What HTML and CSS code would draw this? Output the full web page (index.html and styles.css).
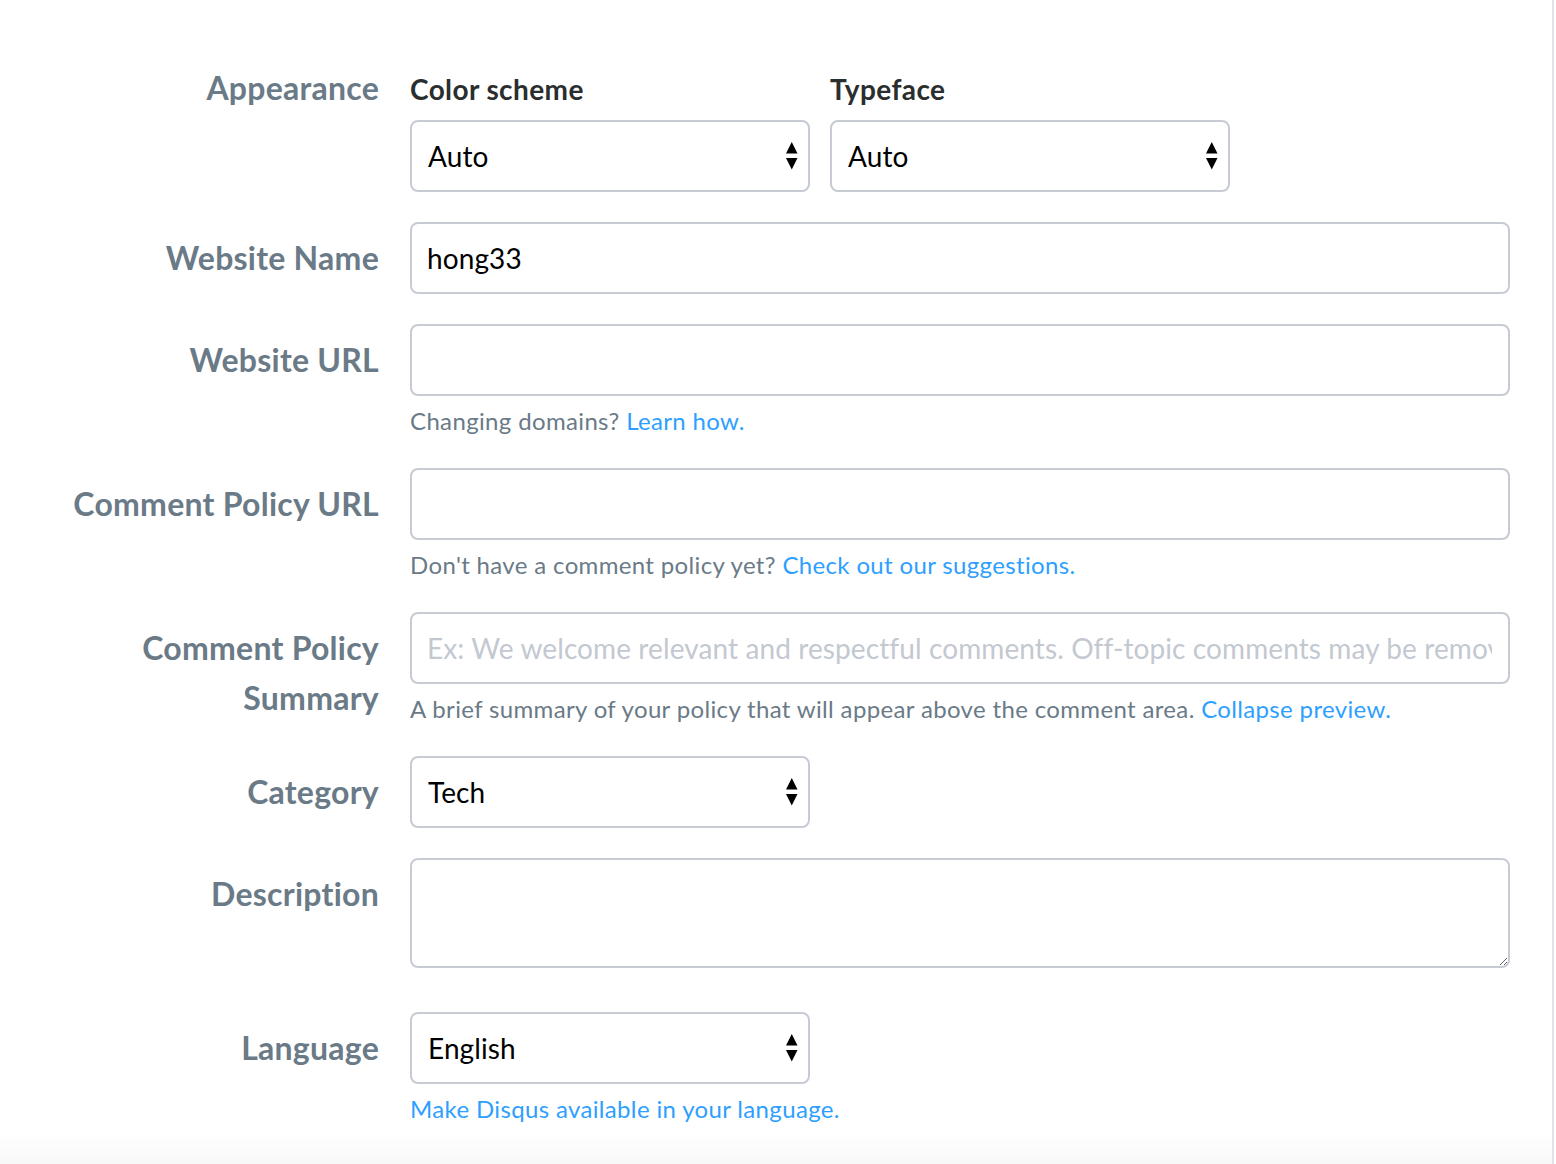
FILE: index.html
```html
<!DOCTYPE html>
<html lang="en">
<head>
<meta charset="utf-8">
<title>General settings</title>
<link rel="stylesheet" href="styles.css">
</head>
<body>
<div class="page">
  <form class="settings">
    <div class="row">
      <div class="label label-top">Appearance</div>
      <div class="field">
        <div class="pair">
          <div class="sub">
            <div class="sublabel">Color scheme</div>
            <div class="select-wrap">
              <select class="select"><option>Auto</option><option>Light</option><option>Dark</option></select>
              <svg class="arrows" viewBox="0 0 12 28" width="12" height="28"><polygon points="0,11.5 5.75,0 11.5,11.5"/><polygon points="0,16 11.5,16 5.75,27.5"/></svg>
            </div>
          </div>
          <div class="sub">
            <div class="sublabel">Typeface</div>
            <div class="select-wrap">
              <select class="select"><option>Auto</option><option>Serif</option><option>Sans-serif</option></select>
              <svg class="arrows" viewBox="0 0 12 28" width="12" height="28"><polygon points="0,11.5 5.75,0 11.5,11.5"/><polygon points="0,16 11.5,16 5.75,27.5"/></svg>
            </div>
          </div>
        </div>
      </div>
    </div>

    <div class="row">
      <div class="label">Website Name</div>
      <div class="field"><input class="input" type="text" value="hong33"></div>
    </div>

    <div class="row">
      <div class="label">Website URL</div>
      <div class="field">
        <input class="input" type="text" value="">
        <p class="help">Changing domains? <a href="#" class="link">Learn how.</a></p>
      </div>
    </div>

    <div class="row">
      <div class="label">Comment Policy URL</div>
      <div class="field">
        <input class="input" type="text" value="">
        <p class="help">Don't have a comment policy yet? <a href="#" class="link">Check out our suggestions.</a></p>
      </div>
    </div>

    <div class="row">
      <div class="label">Comment Policy<br>Summary</div>
      <div class="field">
        <input class="input" type="text" placeholder="Ex: We welcome relevant and respectful comments. Off-topic comments may be removed.">
        <p class="help">A brief summary of your policy that will appear above the comment area. <a href="#" class="link">Collapse preview.</a></p>
      </div>
    </div>

    <div class="row">
      <div class="label">Category</div>
      <div class="field">
        <div class="select-wrap">
          <select class="select"><option>Tech</option><option>News</option><option>Culture</option></select>
          <svg class="arrows" viewBox="0 0 12 28" width="12" height="28"><polygon points="0,11.5 5.75,0 11.5,11.5"/><polygon points="0,16 11.5,16 5.75,27.5"/></svg>
        </div>
      </div>
    </div>

    <div class="row row-wide">
      <div class="label">Description</div>
      <div class="field"><textarea class="textarea"></textarea></div>
    </div>

    <div class="row">
      <div class="label">Language</div>
      <div class="field">
        <div class="select-wrap">
          <select class="select"><option>English</option><option>Español</option></select>
          <svg class="arrows" viewBox="0 0 12 28" width="12" height="28"><polygon points="0,11.5 5.75,0 11.5,11.5"/><polygon points="0,16 11.5,16 5.75,27.5"/></svg>
        </div>
        <p class="help"><a href="#" class="link">Make Disqus available in your language.</a></p>
      </div>
    </div>
  </form>
</div>
</body>
</html>
```

FILE: styles.css
```css
html, body {
  margin: 0;
  padding: 0;
}

body {
  font-family: Lato, "Liberation Sans", sans-serif;
  background: #fff;
}

.page {
  width: 1554px;
  height: 1164px;
  box-sizing: border-box;
  border-right: 2px solid #dfe2e9;
  background: linear-gradient(to bottom, #ffffff 0px, #ffffff 1132px, #f8f8f8 1164px);
  overflow: hidden;
}

.settings {
  padding-top: 69px;
}

.row {
  display: grid;
  grid-template-columns: 379px 1100px;
  column-gap: 31px;
  margin-bottom: 30px;
}

.row-wide {
  margin-bottom: 44px;
}

.label {
  text-align: right;
  font-size: 32px;
  line-height: 50px;
  padding-top: 11px;
  font-weight: 700;
  color: #6a7a87;
  letter-spacing: 0.25px;
}

.label-top {
  padding-top: 0;
  line-height: 38px;
}

.field {
  min-width: 0;
}

.pair {
  display: flex;
  gap: 20px;
}

.sub {
  width: 400px;
}

.sublabel {
  font-size: 28px;
  line-height: 40px;
  font-weight: 700;
  color: #2a2e2e;
  margin-bottom: 11px;
  letter-spacing: 0.4px;
}

.select-wrap {
  position: relative;
  width: 400px;
}

.select,
.input,
.textarea {
  display: block;
  box-sizing: border-box;
  border: 2px solid #c6cbd4;
  border-radius: 8px;
  background: #fff;
  font-family: Lato, "Liberation Sans", sans-serif;
  font-size: 28px;
  letter-spacing: 0.1px;
  color: #000;
  outline: none;
  margin: 0;
}

.select {
  -webkit-appearance: none;
  appearance: none;
  width: 400px;
  height: 72px;
  padding: 0 40px 0 16px;
}

.arrows {
  position: absolute;
  right: 12px;
  top: 22px;
  fill: #000;
  pointer-events: none;
}

.input {
  width: 1100px;
  height: 72px;
  padding: 0 16px 0 15px;
}

.input::placeholder {
  color: #c3c8d1;
  opacity: 1;
}

.textarea {
  width: 1100px;
  height: 110px;
  padding: 12px 15px;
  resize: vertical;
}

.help {
  margin: 7px 0 0;
  font-size: 24px;
  line-height: 35px;
  color: #6a7a87;
  letter-spacing: 0.35px;
}

.link {
  color: #2e9fff;
  text-decoration: none;
}
```
